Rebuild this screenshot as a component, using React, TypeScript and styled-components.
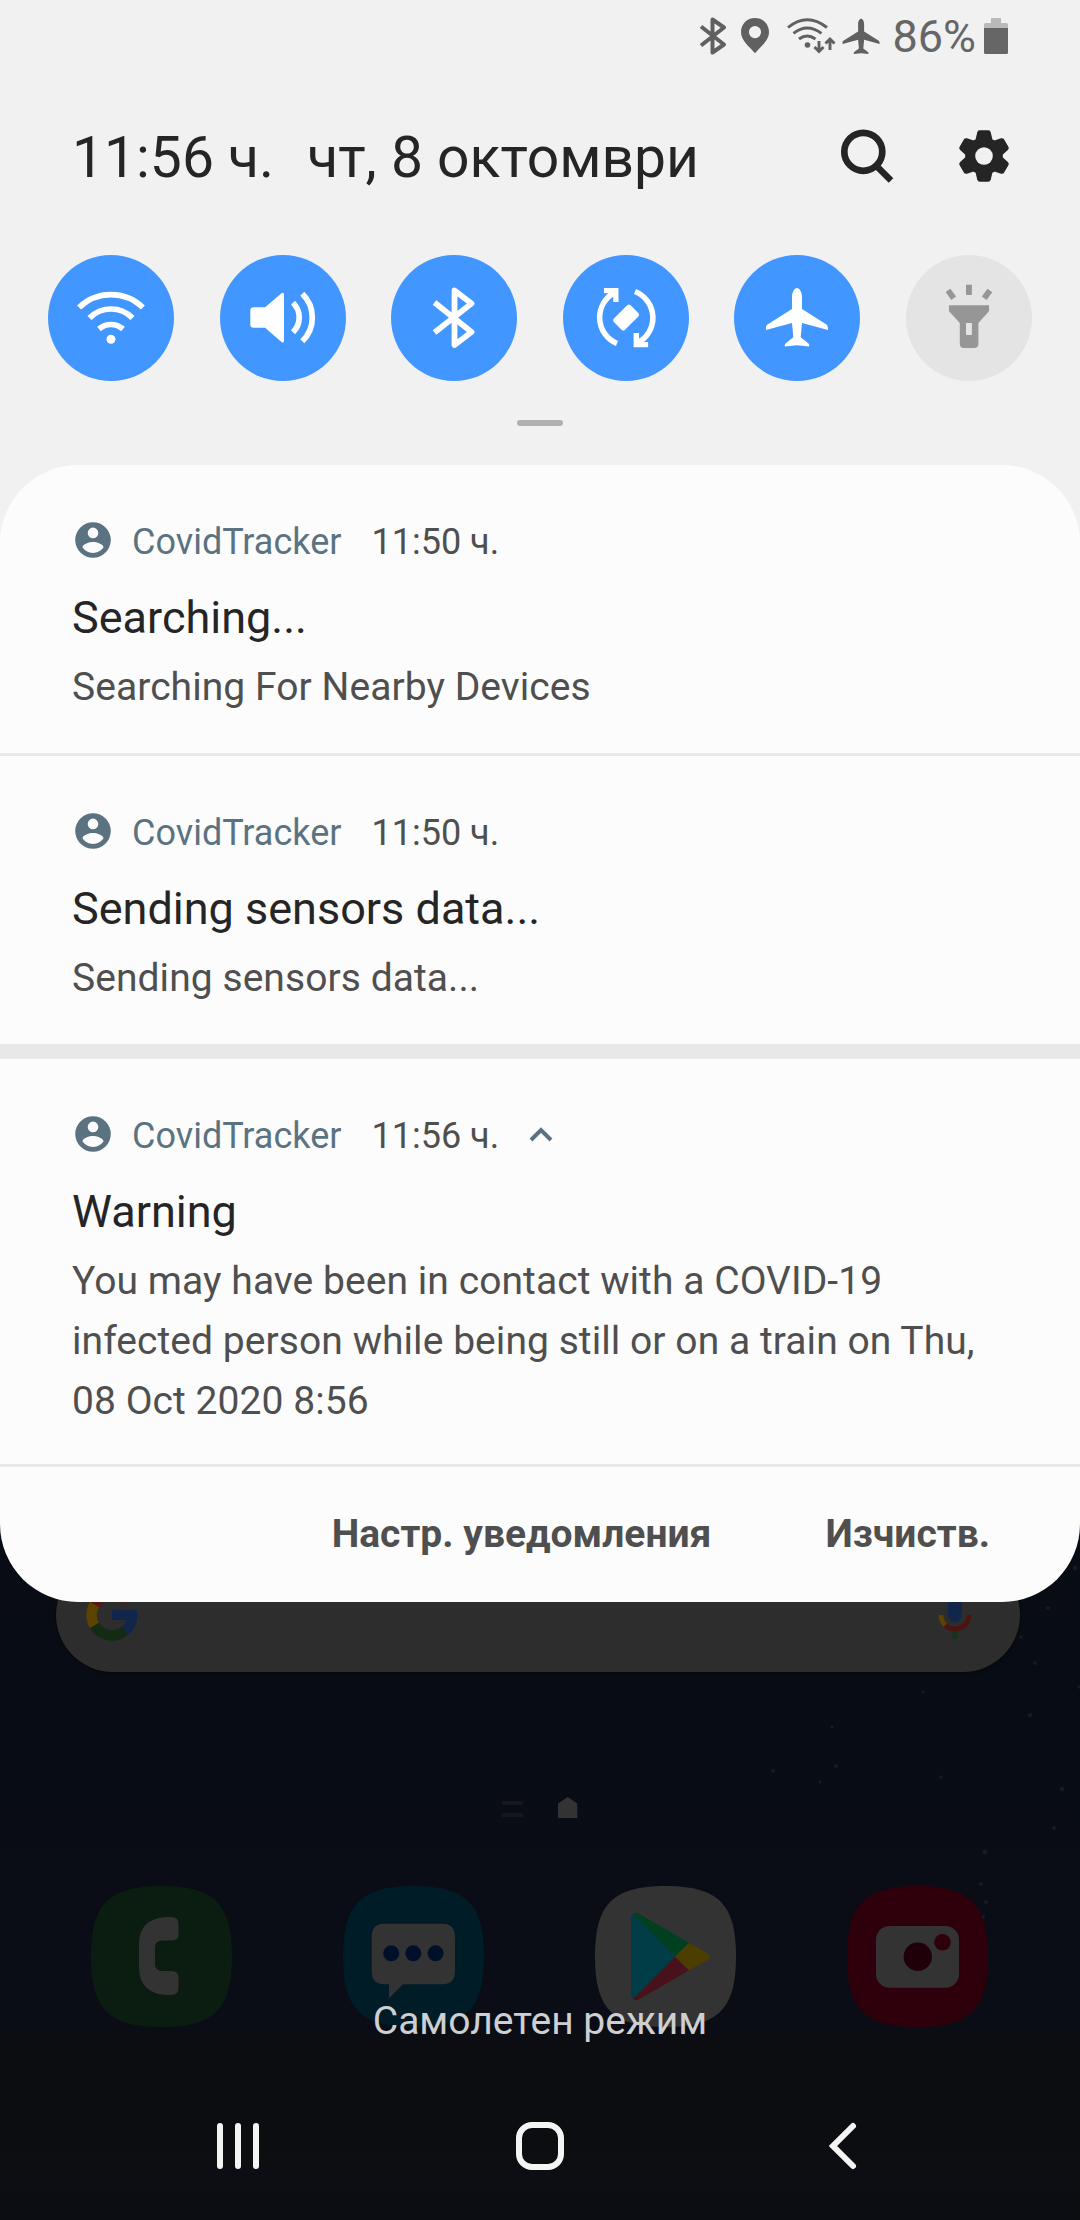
import React from "react";
import styled, { createGlobalStyle } from "styled-components";

const Global = createGlobalStyle`
  * { box-sizing: border-box; }
  body { margin: 0; background: #090c14; }
`;

const Screen = styled.div`
  width: 1080px;
  height: 2220px;
  overflow: hidden;
  display: grid;
  grid-template: 100% / 100%;
  font-family: Roboto, "Noto Sans", sans-serif;
  background: linear-gradient(#080b13 0, #080c14 1700px, #0a0d15 1990px, #0a0d15 2030px, #0c0d12 2038px, #0c0d11 2140px, #0b0e12 2170px, #0c0d12 2220px);
`;

const Layer = styled.div`
  grid-area: 1 / 1;
  display: flex;
  flex-direction: column;
  min-width: 0;
`;

const Stars = styled.svg`
  grid-area: 1 / 1;
  display: block;
`;

/* ---------- dimmed home screen ---------- */

const HomeLayer = styled(Layer)`
  padding-top: 1558px;
`;

const SearchBar = styled.div`
  display: flex;
  justify-content: space-between;
  align-items: center;
  height: 114px;
  margin: 0 60px 0 56px;
  padding: 0 47px 0 29px;
  border-radius: 57px;
  background: #2d2d2e;
  box-shadow: 0 1px 3px rgba(0, 0, 0, 0.5);
`;

const Pages = styled.div`
  display: flex;
  gap: 35px;
  height: 22px;
  margin: 125px 0 0 502px;
`;

const Dock = styled.div`
  display: flex;
  justify-content: space-between;
  margin: 67px 92px 0 91px;
`;

const Glyph = styled.svg`
  display: block;
  flex: none;
  overflow: visible;
`;

/* ---------- notification shade ---------- */

const ShadeTop = styled.header`
  flex: none;
  height: 543px;
  margin-bottom: -78px;
  background: #f1f1f1;
`;

const StatusBar = styled.div`
  display: flex;
  justify-content: flex-end;
  align-items: center;
  height: 72px;
  padding-right: 72px;
`;

const BatteryText = styled.span`
  font-size: 45px;
  line-height: 72px;
  color: #666;
  margin: 2px 8px 0 11px;
`;

const ClockRow = styled.div`
  display: flex;
  align-items: center;
  height: 168px;
  padding: 0 72px;
`;

const Clock = styled.div`
  display: flex;
  flex: 1;
  gap: 33px;
  font-size: 57px;
  line-height: 68px;
  color: #252525;
  white-space: nowrap;
  padding-top: 4px;
`;

const Tiles = styled.div`
  display: flex;
  justify-content: space-between;
  margin-top: 15px;
  padding: 0 48px;
`;

const Tile = styled.div<{ $on: boolean }>`
  width: 126px;
  height: 126px;
  border-radius: 50%;
  color: ${(p) => (p.$on ? "#fff" : "#969696")};
  background: ${(p) => (p.$on ? "#4296ff" : "#e4e4e4")};
`;

const DragHandle = styled.div`
  width: 46px;
  height: 6px;
  border-radius: 3px;
  margin: 39px auto 0;
  background: #b0b0b0;
`;

const Panel = styled.main`
  flex: none;
  display: flex;
  flex-direction: column;
  border-radius: 78px;
  overflow: hidden;
  background: #fcfcfc;
`;

const Card = styled.section<{ $height: number }>`
  height: ${(p) => p.$height}px;
  padding: 54px 72px 0;
`;

const Rule = styled.div<{ $size: number }>`
  height: ${(p) => p.$size}px;
  background: #e8e8e8;
`;

const CardHead = styled.div`
  display: flex;
  align-items: center;
  height: 42px;
  font-size: 36px;
  line-height: 42px;
  white-space: nowrap;
`;

const AppName = styled.span`
  color: #5b7380;
  margin: 4px 0 0 18px;
`;

const Time = styled.span`
  color: #4f4f4f;
  margin: 4px 30px 0 30px;
`;

const Title = styled.h2`
  margin: 30px 0 0;
  font-size: 45px;
  line-height: 54px;
  font-weight: 400;
  color: #252525;
`;

const Body = styled.p`
  margin: 12px 0 0;
  font-size: 39px;
  line-height: 60px;
  letter-spacing: 0.06px;
  color: #4f4f4f;
  white-space: pre;
`;

const Actions = styled.div`
  display: flex;
  justify-content: flex-end;
  gap: 114px;
  height: 135px;
  padding-right: 90px;
`;

const Action = styled.span`
  font-size: 39px;
  line-height: 135px;
  font-weight: 700;
  color: #4f4f4f;
`;

const Carrier = styled.div`
  margin-top: auto;
  text-align: center;
  font-size: 39px;
  line-height: 46px;
  color: #cdcfd1;
`;

const NavBar = styled.nav`
  display: grid;
  grid-template-columns: 299px 313px 27px;
  align-items: center;
  height: 148px;
  margin-top: 28px;
  padding-left: 217px;
`;

const squircle =
  "M70.5 0C123 0 141 18 141 70.5S123 141 70.5 141 0 123 0 70.5 18 0 70.5 0Z";

const planePath =
  "M63 33C65.5 33 68 37 68 42V54L92.500 69.500Q94 70.500 93.900 75L68 68L66.700 82.300L74.500 88.500Q76 90 75 91.500L63 90.300L51 91.500Q50 90 51.500 88.500L59.300 82.300L58 68L32 75Q31.500 70.500 33.500 69.500L58 54V42C58 37 60.500 33 63 33Z";
const bluetoothPath = "M43.500 47.500L80.500 77L63.500 90V35.500L80.500 48.500L43.500 77.500";

const tiles: { name: string; on: boolean; art: React.ReactNode }[] = [
  {
    name: "wifi",
    on: true,
    art: (
      <>
        <g fill="none" stroke="currentColor" strokeWidth="5.7">
          <path d="M31.100 52.500A46.100 46.100 0 0 1 94.900 52.500" />
          <path d="M41.500 63A30.200 30.200 0 0 1 84.500 63" />
          <path d="M51 74A18.200 18.200 0 0 1 75 74" />
        </g>
        <circle cx="63" cy="84.300" r="4.500" fill="currentColor" />
      </>
    ),
  },
  {
    name: "sound",
    on: true,
    art: (
      <>
        <path
          fill="currentColor"
          d="M33.500 52.300H45.100L61.500 38.300Q64 36.800 64 39.500V85.800Q64 88.500 61.500 87L45.100 72.700H33.500Q30.300 72.700 30.300 69.500V55.500Q30.300 52.300 33.500 52.300Z"
        />
        <g fill="none" stroke="currentColor" strokeWidth="5.7">
          <path d="M73 47.800A20.500 20.500 0 0 1 73 77.200" />
          <path d="M82.300 38.700A33.300 33.300 0 0 1 82.300 86.300" />
        </g>
      </>
    ),
  },
  {
    name: "bluetooth",
    on: true,
    art: (
      <path d={bluetoothPath} fill="none" stroke="currentColor" strokeWidth="5.8" strokeLinejoin="round" />
    ),
  },
  {
    name: "rotation",
    on: true,
    art: (
      <>
        <g fill="none" stroke="currentColor" strokeWidth="5.5">
          <path d="M54 88.500A28.300 28.300 0 0 1 51.500 37.500" />
          <path d="M72 36.500A28.300 28.300 0 0 1 74.500 88" />
        </g>
        <path fill="currentColor" d="M41 33H55.500V47H50.200V42L46.500 38.300H41Z" />
        <path fill="currentColor" d="M70.600 78H76V83L79.500 87H85.100V92.300H70.600Z" />
        <rect x="51.200" y="54.600" width="23.800" height="15.800" rx="2.500" fill="currentColor" transform="rotate(-45 63.100 62.500)" />
      </>
    ),
  },
  { name: "airplane", on: true, art: <path d={planePath} fill="currentColor" /> },
  {
    name: "torch",
    on: false,
    art: (
      <g fill="currentColor">
        <rect x="60" y="29.700" width="5.900" height="10.300" />
        <rect x="41.900" y="34.500" width="5.900" height="9.600" transform="rotate(-36 44.800 39.300)" />
        <rect x="78.100" y="34.500" width="5.900" height="9.600" transform="rotate(36 81 39.300)" />
        <path
          fillRule="evenodd"
          d="M43 50.300H83V56.300L72.400 68V88.500Q72.400 93 68 93H58Q53.800 93 53.800 88.500V68L43 56.300ZM60 68V80H65.900V68Z"
        />
      </g>
    ),
  },
];

const notifications = [
  { title: "Searching...", body: "Searching For Nearby Devices", time: "11:50 ч.", height: 288, rule: 3, open: false },
  { title: "Sending sensors data...", body: "Sending sensors data...", time: "11:50 ч.", height: 288, rule: 15, open: false },
  {
    title: "Warning",
    body: "You may have been in contact with a COVID-19\ninfected person while being still or on a train on Thu,\n08 Oct 2020 8:56",
    time: "11:56 ч.",
    height: 405,
    rule: 3,
    open: true,
  },
];

const stars = [
  [773, 1771, 2], [836, 1766, 2], [820, 1782, 1.5], [941, 1777, 1.8], [1062, 1789, 2.3],
  [1054, 1828, 2], [985, 1852, 2.5], [981, 1884, 2], [986, 1902, 2], [983, 1917, 2],
  [1075, 1568, 2.2], [1048, 1608, 2], [1021, 1637, 1.8], [1035, 1663, 2], [923, 1692, 1.7],
  [1030, 1715, 2.2], [1079, 1687, 1.7], [832, 1727, 1.7],
];

const StatusIcons = () => (
  <Glyph width="182" height="38" viewBox="698 17 182 38">
    <g fill="none" stroke="#606060" strokeWidth="4">
      <path strokeLinejoin="round" d="M700 26.500L723 44.500L711.500 52.500V19.500L723 27.500L700 45.500" />
      <g strokeWidth="2.900">
        <path d="M787 27.500Q806 12 826 27.500" />
        <path d="M792.500 33.300Q806 22.500 820.500 33.300" />
        <path d="M798 39Q806 33 814.500 39" />
        <path d="M818 41V51M813.500 47L818 51.500L822.500 47M829 50V40M824.500 43.500L829 39L833.500 43.500" />
      </g>
    </g>
    <circle cx="806.500" cy="45" r="2.800" fill="#606060" />
    <path
      fill="#606060"
      fillRule="evenodd"
      d="M754 18C762 18 768 24.200 768 32C768 41 759 47 754 53.300C749 47 740 41 740 32C740 24.200 746 18 754 18ZM754 26A6.100 6.100 0 1 0 754 38.200A6.100 6.100 0 0 0 754 26Z"
    />
    <path fill="#606060" transform="translate(822.300 -1) scale(.6)" d={planePath} />
  </Glyph>
);

const Battery = () => (
  <Glyph width="24" height="36" viewBox="0 0 24 36">
    <path fill="#bababa" d="M7 0H17V5H22.500Q24 5 24 6.500V10H0V6.500Q0 5 1.500 5H7Z" />
    <path fill="#666" d="M0 10H24V34.500Q24 36 22.500 36H1.500Q0 36 0 34.500Z" />
  </Glyph>
);

const SearchIcon = styled(Glyph)`
  margin: -1px 66px 0 0;
`;

const teeth = [0, 60, 120, 180, 240, 300];

const Gear = () => (
  <Glyph width="48" height="52" viewBox="-24 -26 48 52">
    <mask id="gearHole">
      <rect x="-30" y="-30" width="60" height="60" fill="#fff" />
      <circle r="8.800" fill="#000" />
    </mask>
    <g fill="#252525" mask="url(#gearHole)">
      <circle r="18.800" />
      {teeth.map((a) => (
        <path key={a} transform={`rotate(${a})`} d="M-8.500 -16L-6.800 -23.600Q-6.300 -25.700 -4.500 -25.700H4.500Q6.300 -25.700 6.800 -23.600L8.500 -16Z" />
      ))}
    </g>
  </Glyph>
);

const AppIcon = () => (
  <Glyph width="42" height="42" viewBox="0 0 42 42">
    <path
      fill="#5b7380"
      fillRule="evenodd"
      d="M21 3.200A17.800 17.800 0 1 0 21 38.800A17.800 17.800 0 0 0 21 3.200ZM21 8.600A5.300 5.300 0 1 1 21 19.200A5.300 5.300 0 0 1 21 8.600ZM21 33.900C16.500 33.900 12.700 31.700 10.500 28.300C10.600 24.800 17.500 22.900 21 22.900S31.400 24.800 31.500 28.300C29.300 31.700 25.500 33.900 21 33.900Z"
    />
  </Glyph>
);

const GoogleG = () => (
  <Glyph width="54" height="54" viewBox="-27 -27 54 54">
    <g fill="none" strokeWidth="10.500">
      <path stroke="#5b1512" d="M-17.500 -10.500A20.400 20.400 0 0 1 14.500 -14.400" />
      <path stroke="#5c4300" d="M-17.500 -10.500A20.400 20.400 0 0 0 -17.500 10.500" />
      <path stroke="#122b12" d="M-17.500 10.500A20.400 20.400 0 0 0 13 15.700" />
      <path stroke="#11264a" d="M13 15.700A20.400 20.400 0 0 0 20.200 2" />
    </g>
    <path fill="#11264a" d="M0 -5H25Q26 0 24.500 5H0Z" />
  </Glyph>
);

const Mic = () => (
  <Glyph width="36" height="54" viewBox="-18 -27 36 54">
    <rect x="-7" y="-26" width="14" height="33" rx="7" fill="#11264a" />
    <g fill="none" strokeWidth="4.800">
      <path stroke="#5c4300" d="M-14 0A14 14 0 0 0 -9.700 10.200" />
      <path stroke="#4e1310" d="M-9.700 10.200A14 14 0 0 0 14 0" />
      <path stroke="#123519" d="M0 16.500V24" />
    </g>
  </Glyph>
);

export default function App() {
  return (
    <>
      <Global />
      <Screen>
        <Stars width="1080" height="2220">
          {stars.map(([x, y, r]) => (
            <circle key={`${x}-${y}`} cx={x} cy={y} r={r} fill="#171b23" />
          ))}
        </Stars>

        <HomeLayer>
          <SearchBar>
            <GoogleG />
            <Mic />
          </SearchBar>
          <Pages>
            <Glyph width="21" height="22" viewBox="0 0 21 22">
              <path fill="#15171d" d="M0 4H21V8H0ZM0 16H21V20H0Z" />
            </Glyph>
            <Glyph width="20" height="22" viewBox="0 0 20 22">
              <path fill="#333" d="M0 6.500L9.700 0L19.300 6.500V21H0Z" />
            </Glyph>
          </Pages>
          <Dock>
            <Glyph width="141" height="141" viewBox="0 0 141 141">
              <path fill="#0b1d11" d={squircle} />
              <path
                fill="#333"
                d="M75 31H80Q87.500 31 87.500 38V48Q87.500 54.500 81 54.500H71Q64 54.500 64 62V78Q64 85 71 85H81Q87.500 85 87.500 92V102Q87.500 109 80 109H75Q48 107 48 81V58Q48 33 75 31Z"
              />
            </Glyph>
            <Glyph width="141" height="141" viewBox="0 0 141 141">
              <path fill="#001c27" d={squircle} />
              <path fill="#333" d="M41.500 37.700H99Q112 37.700 112 51V85Q112 98.300 99 98.300H60L46 112.300V98.300H41.500Q28.700 98.300 28.700 85V51Q28.700 37.700 41.500 37.700Z" />
              <g fill="#001029">
                <circle cx="48.200" cy="67.300" r="8" />
                <circle cx="70.300" cy="67.300" r="8" />
                <circle cx="92.600" cy="67.300" r="8" />
              </g>
            </Glyph>
            <Glyph width="141" height="141" viewBox="0 0 141 141">
              <path fill="#333" d={squircle} />
              <path fill="#003d47" d="M38 28L80 70.700L38 113Q36 111.500 36 109V32Q36 29.500 38 28Z" />
              <path fill="#003f1f" d="M38 28Q40 26 43.500 27.600L94 56.700L80 70.700Z" />
              <path fill="#4c3e00" d="M94 56.700L112 67Q117.500 70.700 112 74.300L94 84.500L80 70.700Z" />
              <path fill="#47121b" d="M80 70.700L94 84.500L43.500 113.500Q40 115 38 113Z" />
            </Glyph>
            <Glyph width="141" height="141" viewBox="0 0 141 141">
              <path fill="#2e000c" d={squircle} />
              <rect x="29" y="40" width="83" height="61.700" rx="13.500" fill="#333" />
              <circle cx="70.800" cy="70.700" r="14.200" fill="#1f0008" />
              <circle cx="95.500" cy="56.300" r="8.300" fill="#2e000c" />
            </Glyph>
          </Dock>
        </HomeLayer>

        <Layer>
          <ShadeTop>
            <StatusBar>
              <StatusIcons />
              <BatteryText>86%</BatteryText>
              <Battery />
            </StatusBar>
            <ClockRow>
              <Clock>
                <span>11:56 ч.</span>
                <span>чт, 8 октомври</span>
              </Clock>
              <SearchIcon width="53" height="54" viewBox="0 0 53 54">
                <circle cx="22.300" cy="22.800" r="19" fill="none" stroke="#252525" strokeWidth="6.700" />
                <path d="M36 37.500L50 51.500" stroke="#252525" strokeWidth="6.500" />
              </SearchIcon>
              <Gear />
            </ClockRow>
            <Tiles>
              {tiles.map((t) => (
                <Tile key={t.name} $on={t.on}>
                  <Glyph width="126" height="126" viewBox="0 0 126 126">
                    {t.art}
                  </Glyph>
                </Tile>
              ))}
            </Tiles>
            <DragHandle />
          </ShadeTop>

          <Panel>
            {notifications.map((n) => (
              <React.Fragment key={n.title}>
                <Card $height={n.height}>
                  <CardHead>
                    <AppIcon />
                    <AppName>CovidTracker</AppName>
                    <Time>{n.time}</Time>
                    {n.open && (
                      <Glyph width="24" height="16" viewBox="0 0 24 16">
                        <path d="M2 14L12 4L22 14" fill="none" stroke="#5b7380" strokeWidth="4" />
                      </Glyph>
                    )}
                  </CardHead>
                  <Title>{n.title}</Title>
                  <Body>{n.body}</Body>
                </Card>
                <Rule $size={n.rule} />
              </React.Fragment>
            ))}
            <Actions>
              <Action>Настр. уведомления</Action>
              <Action>Изчиств.</Action>
            </Actions>
          </Panel>

          <Carrier>Самолетен режим</Carrier>
          <NavBar>
            <Glyph width="42" height="46" viewBox="0 0 42 46">
              <path d="M3 3V43M21 3V43M39 3V43" stroke="#f4f4f4" strokeWidth="6" strokeLinecap="round" />
            </Glyph>
            <Glyph width="48" height="48" viewBox="0 0 48 48">
              <rect x="3" y="3" width="42" height="42" rx="13" fill="none" stroke="#f4f4f4" strokeWidth="6" />
            </Glyph>
            <Glyph width="27" height="46" viewBox="0 0 27 46">
              <path d="M24 3L4 23L24 43" fill="none" stroke="#f4f4f4" strokeWidth="6" strokeLinecap="round" />
            </Glyph>
          </NavBar>
        </Layer>
      </Screen>
    </>
  );
}
